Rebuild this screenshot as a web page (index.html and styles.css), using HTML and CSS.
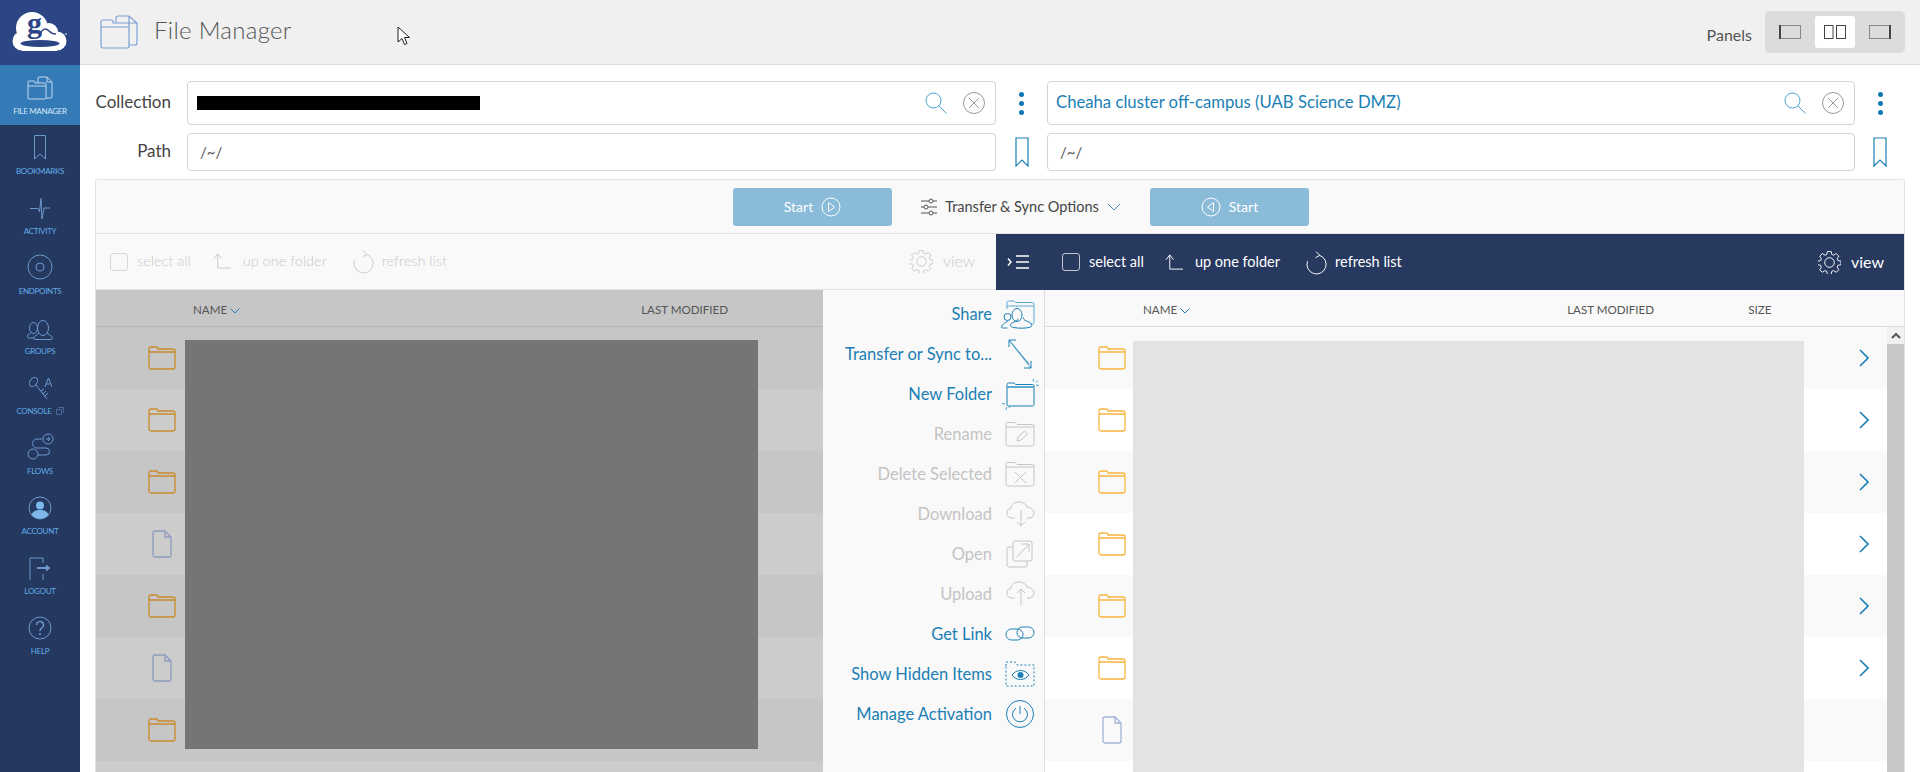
FILE: index.html
```html
<!DOCTYPE html>
<html lang="en">
<head>
    <meta charset="UTF-8">
    <title>File Manager</title>
    <link rel="stylesheet" href="styles.css">
</head>
<body>
    <svg class="defs" width="0" height="0">
        <symbol id="folder" viewBox="0 0 28 24">
            <path d="M1 6V3a2 2 0 0 1 2-2h5a2 2 0 0 1 2 2h15a2 2 0 0 1 2 2v16a2 2 0 0 1-2 2H3a2 2 0 0 1-2-2zM1 6h26" fill="none" stroke="currentColor" stroke-width="1.3"/>
        </symbol>
        <symbol id="file" viewBox="0 0 20 28">
            <path d="M3 1h10l6 6v18a2 2 0 0 1-2 2H3a2 2 0 0 1-2-2V3a2 2 0 0 1 2-2zM13 1v6h6" fill="none" stroke="currentColor" stroke-width="1.3"/>
        </symbol>
        <symbol id="chev" viewBox="0 0 10 18">
            <path d="M1 1l8 8-8 8" fill="none" stroke="currentColor" stroke-width="1.6"/>
        </symbol>
        <symbol id="gear" viewBox="0 0 24 24">
            <path d="M10 1h4l.6 3.2 2 .9L19.400 3.300l2.800 2.800-1.800 2.700.9 2 3.200.6v3.800l-3.200.6-.9 2 1.800 2.700-2.800 2.800-2.800-1.800-2 .9-.6 3.200h-4l-.6-3.200-2-.9-2.800 1.800-2.800-2.800 1.800-2.700-.9-2-3.200-.6v-3.800l3.200-.6.9-2-1.800-2.700 2.800-2.800 2.800 1.800 2-.9z" transform="translate(0 -.6) scale(.98)" fill="none" stroke="currentColor"/>
            <circle cx="12" cy="12" r="5" fill="none" stroke="currentColor"/>
        </symbol>
        <symbol id="up" viewBox="0 0 20 18">
            <path d="M1 6l4-5 4 5M5 1v15h14" fill="none" stroke="currentColor"/>
        </symbol>
        <symbol id="refresh" viewBox="0 0 22 26">
            <path d="M14.400 5.600A10 10 0 1 1 1.600 11.700M10.500 1.500l4 4-4.500 2.500" fill="none" stroke="currentColor"/>
        </symbol>
    </svg>

    <nav class="sidebar">
        <div class="logo">
            <svg width="80" height="65" viewBox="0 0 80 65">
                <g fill="#fff">
                    <circle cx="32" cy="28" r="16"/>
                    <circle cx="49" cy="32" r="9"/>
                    <circle cx="57" cy="41" r="9.500"/>
                    <circle cx="22" cy="41" r="9.500"/>
                    <rect x="22" y="34" width="35" height="17"/>
                    <circle cx="66" cy="34" r=".8"/>
                </g>
                <ellipse cx="40" cy="43.500" rx="19.500" ry="3.500" fill="#2c4585"/>
                <path d="M40 34c3-6 6-6 9-3 2 2 4 3 7 3" fill="none" stroke="#2c4585" stroke-width="1.500"/>
                <text x="27" y="33" class="logo-g">g</text>
            </svg>
        </div>
        <a class="nav-item nav-active">
            <svg width="26" height="24" viewBox="0 0 26 24" fill="none" stroke="#c4d9ee"><path d="M1 8V6a1 1 0 0 1 1-1h5a1 1 0 0 1 1 1v1h10a1 1 0 0 1 1 1v14a1 1 0 0 1-1 1H2a1 1 0 0 1-1-1zM1 10h18M11 7V2a1 1 0 0 1 1-1h8l5 5v15a1 1 0 0 1-1 1h-5M20 1v5h5"/></svg>
            <span>File Manager</span>
        </a>
        <a class="nav-item">
            <svg width="12" height="25" viewBox="0 0 12 25" fill="none" stroke="#6c98cc"><path d="M.5.5h11v23.500L6 19 .5 24z"/></svg>
            <span>Bookmarks</span>
        </a>
        <a class="nav-item">
            <svg width="20" height="22" viewBox="0 0 20 22" fill="none" stroke="#6c98cc"><path d="M0 10.500h8l1.500 3.500L11 .5l1 20.500 2-11h6"/></svg>
            <span>Activity</span>
        </a>
        <a class="nav-item">
            <svg width="26" height="26" viewBox="0 0 26 26" fill="none" stroke="#6c98cc"><circle cx="13" cy="13" r="12"/><circle cx="13" cy="13" r="4"/></svg>
            <span>Endpoints</span>
        </a>
        <a class="nav-item">
            <svg width="26" height="20" viewBox="0 0 26 20" fill="none" stroke="#6c98cc"><ellipse cx="16" cy="8" rx="5.500" ry="7.500"/><path d="M11.500 13C11 15 8 15 7 17c-1 2 0 2.500 2 2.500h14c2 0 3-.5 2-2.500-1-2-4-2-4.500-4"/><ellipse cx="6.500" cy="8" rx="4" ry="5.500"/><path d="M4 12.500C3 14 1 14 .5 16 0 17.500 1 18 2 18h4"/></svg>
            <span>Groups</span>
        </a>
        <a class="nav-item">
            <svg width="24" height="24" viewBox="0 0 24 24" fill="none" stroke="#6c98cc"><ellipse cx="5.500" cy="6" rx="3.500" ry="5" transform="rotate(35 5.500 6)"/><path d="M8 9l11 14M13 15l3-2M15 18l3-3M17 20l3-3M17 11l3.500-9 3.500 9M18.500 8h4"/></svg>
            <span class="nav-ext">Console<svg width="8" height="8" viewBox="0 0 8 8" fill="none" stroke="#4e6a98"><path d="M.5 2.500h5v5h-5zM2.500.5h5v5"/></svg></span>
        </a>
        <a class="nav-item">
            <svg width="27" height="27" viewBox="0 0 27 27" fill="none" stroke="#6c98cc"><circle cx="21" cy="6" r="5"/><circle cx="6" cy="21" r="5"/><path d="M19 6h4l-2-2M23 6l-2 2M15 6H10a4 4 0 0 0 0 9h9a3 3 0 0 1 0 7h-8"/></svg>
            <span>Flows</span>
        </a>
        <a class="nav-item">
            <svg width="24" height="24" viewBox="0 0 24 24"><circle cx="12" cy="12" r="11" fill="none" stroke="#6c98cc"/><circle cx="12" cy="9.500" r="4" fill="#7db8ec"/><path d="M3.500 19c1-4 5-5 8.500-5s7.500 1 8.500 5c-4.500 5-12.500 5-17 0z" fill="#7db8ec"/></svg>
            <span>Account</span>
        </a>
        <a class="nav-item">
            <svg width="22" height="23" viewBox="0 0 22 23" fill="none" stroke="#6c98cc"><path d="M1 23V1h13v5M14 17v6"/><path d="M8 11h12M17 8.500l3 2.500-3 2.500" stroke-width="1.800"/></svg>
            <span>Logout</span>
        </a>
        <a class="nav-item">
            <svg width="24" height="24" viewBox="0 0 24 24" fill="none" stroke="#6c98cc"><circle cx="12" cy="12" r="11"/><path d="M8.500 9a3.500 3.500 0 1 1 5 3.200c-1 .6-1.500 1.300-1.500 2.800" stroke-width="1.400"/><path d="M12 17v2" stroke-width="1.600"/></svg>
            <span>Help</span>
        </a>
    </nav>

    <main class="main">
        <header class="topbar">
            <svg class="title-icon" width="38" height="34" viewBox="0 0 38 34" fill="none" stroke="#7e9fd6" stroke-width="1.200"><path d="M1 9V7a2 2 0 0 1 2-2h8a2 2 0 0 1 2 2v1h14a2 2 0 0 1 2 2v21a2 2 0 0 1-2 2H3a2 2 0 0 1-2-2zM1 12h28M16 8V3a2 2 0 0 1 2-2h11l8 7v20a2 2 0 0 1-2 2h-6M29 1v7h8"/></svg>
            <h1>File Manager</h1>
            <svg class="cursor" width="14" height="20" viewBox="0 0 14 20"><path d="M1 1v15l4-3.500 2.500 6 2.500-1-2.500-6H12.500z" fill="#fff" stroke="#222"/></svg>
            <span class="panels-label">Panels</span>
            <div class="panels">
                <button class="panel-btn"><svg width="22" height="14" viewBox="0 0 22 14"><rect x=".5" y=".5" width="21" height="13" fill="none" stroke="#888"/><path d="M1 0v14" stroke="#444" stroke-width="2"/></svg></button>
                <button class="panel-btn panel-on"><svg width="22" height="14" viewBox="0 0 22 14" fill="none" stroke="#444"><rect x=".5" y=".5" width="8.500" height="13"/><rect x="12.500" y=".5" width="9" height="13"/></svg></button>
                <button class="panel-btn"><svg width="22" height="14" viewBox="0 0 22 14"><rect x=".5" y=".5" width="21" height="13" fill="none" stroke="#888"/><path d="M21 0v14" stroke="#444" stroke-width="2"/></svg></button>
            </div>
        </header>

        <div class="content">
            <div class="form">
                <label>Collection</label>
                <div class="field field-tall">
                    <span class="redact"></span>
                    <svg class="search" width="22" height="22" viewBox="0 0 22 22" fill="none" stroke="#4a9fd0"><circle cx="8.500" cy="8.500" r="7.500"/><path d="M14 14l7.500 7.500"/></svg>
                    <svg width="22" height="22" viewBox="0 0 22 22" fill="none" stroke="#999"><circle cx="11" cy="11" r="10.500"/><path d="M6 6l10 10M16 6L6 16"/></svg>
                </div>
                <div class="dots"><i></i><i></i><i></i></div>
                <div class="field field-tall">
                    <span class="collection-name">Cheaha cluster off-campus (UAB Science DMZ)</span>
                    <svg class="search" width="22" height="22" viewBox="0 0 22 22" fill="none" stroke="#4a9fd0"><circle cx="8.500" cy="8.500" r="7.500"/><path d="M14 14l7.500 7.500"/></svg>
                    <svg width="22" height="22" viewBox="0 0 22 22" fill="none" stroke="#999"><circle cx="11" cy="11" r="10.500"/><path d="M6 6l10 10M16 6L6 16"/></svg>
                </div>
                <div class="dots"><i></i><i></i><i></i></div>

                <label>Path</label>
                <div class="field"><span>/~/</span></div>
                <div class="mark"><svg width="14" height="30" viewBox="0 0 14 30" fill="none" stroke="#1b7fb5" stroke-width="1.200"><path d="M1 1h12v28l-6-6-6 6z"/></svg></div>
                <div class="field"><span>/~/</span></div>
                <div class="mark"><svg width="14" height="30" viewBox="0 0 14 30" fill="none" stroke="#1b7fb5" stroke-width="1.200"><path d="M1 1h12v28l-6-6-6 6z"/></svg></div>
            </div>

            <section class="panel">
                <div class="startbar">
                    <button class="start">Start
                        <svg width="20" height="20" viewBox="0 0 20 20" fill="none" stroke="#fff"><circle cx="10" cy="10" r="9"/><path d="M7.500 5.500l6 4.500-6 4.500z"/></svg>
                    </button>
                    <div class="options">
                        <svg width="16" height="20" viewBox="0 0 16 20" fill="none" stroke="#555"><path d="M0 4h8M12 4h4M0 10h3M7 10h9M0 16h8M12 16h4"/><circle cx="10" cy="4" r="2"/><circle cx="5" cy="10" r="2"/><circle cx="10" cy="16" r="2"/></svg>
                        <span>Transfer &amp; Sync Options</span>
                        <svg width="14" height="8" viewBox="0 0 14 8" fill="none" stroke="#5b86c8"><path d="M1 1l6 6 6-6"/></svg>
                    </div>
                    <button class="start">
                        <svg width="20" height="20" viewBox="0 0 20 20" fill="none" stroke="#fff"><circle cx="10" cy="10" r="9"/><path d="M12.500 5.500l-6 4.500 6 4.500z"/></svg>
                        Start
                    </button>
                </div>

                <div class="toolbars">
                    <div class="toolbar toolbar-left">
                        <span class="check"></span><span class="tool-text">select all</span>
                        <svg class="tool-up" width="19" height="17"><use href="#up"/></svg><span class="tool-text">up one folder</span>
                        <svg class="tool-refresh" width="21" height="25"><use href="#refresh"/></svg><span class="tool-text">refresh list</span>
                        <svg class="tool-gear" width="23" height="23"><use href="#gear"/></svg><span class="tool-text tool-view">view</span>
                    </div>
                    <div class="toolbar toolbar-right">
                        <svg class="collapse" width="22" height="16" viewBox="0 0 22 16" fill="none" stroke="#fff" stroke-width="1.500"><path d="M1 4.500l3 3.500-3 3.500M9 2h13M9 8h13M9 14h13"/></svg>
                        <span class="check"></span><span class="tool-text">select all</span>
                        <svg class="tool-up" width="19" height="17"><use href="#up"/></svg><span class="tool-text">up one folder</span>
                        <svg class="tool-refresh" width="21" height="25"><use href="#refresh"/></svg><span class="tool-text">refresh list</span>
                        <svg class="tool-gear" width="23" height="23"><use href="#gear"/></svg><span class="tool-text tool-view">view</span>
                    </div>
                </div>

                <div class="lists">
                    <div class="list list-dim">
                        <div class="list-head">
                            <span class="col-name">NAME <svg width="10" height="6" viewBox="0 0 10 6" fill="none" stroke="#1b7fb5"><path d="M.5.5L5 5 9.500.5"/></svg></span>
                            <span class="col-date">LAST MODIFIED</span>
                        </div>
                        <div class="rows">
                            <div class="row"><svg class="ico-folder"><use href="#folder"/></svg></div>
                            <div class="row"><svg class="ico-folder"><use href="#folder"/></svg></div>
                            <div class="row"><svg class="ico-folder"><use href="#folder"/></svg></div>
                            <div class="row"><svg class="ico-file"><use href="#file"/></svg></div>
                            <div class="row"><svg class="ico-folder"><use href="#folder"/></svg></div>
                            <div class="row"><svg class="ico-file"><use href="#file"/></svg></div>
                            <div class="row"><svg class="ico-folder"><use href="#folder"/></svg></div>
                            <div class="row"></div>
                            <div class="blur"></div>
                        </div>
                    </div>

                    <div class="menu">
                        <a class="menu-item"><span>Share</span>
                            <svg viewBox="0 0 30 30" fill="none" stroke="#1b7fb5"><path d="M2 10V3.500A1.500 1.500 0 0 1 3.500 2H9l1.500 1.500h17A1.500 1.500 0 0 1 29 5v18.500a1.500 1.500 0 0 1-1.500 1.500H25M2 7h27" stroke="#5fa9d4"/><ellipse cx="12" cy="16" rx="5" ry="6.500"/><path d="M14 20.500c0 2-1.500 2.500-4 3.500-2.500 1-3.500 2-3.500 3.500 0 1 1 1.500 3 2 6 1 13 1 17-.5 1.500-.5 1.500-1.500 1-2.500-.5-2-3-2.500-5-3.500-2.500-1-3-1.500-3-3.500" transform="translate(-1 -1)"/><circle cx="2.500" cy="18" r="3.500"/><path d="M3 22c-.5 1-2 1-3.500 2-1.500 1-3 3-3 4s1 1 3 1h3"/></svg>
                        </a>
                        <a class="menu-item"><span>Transfer or Sync to...</span>
                            <svg viewBox="0 0 30 30" fill="none" stroke="#1b7fb5"><path d="M4 1l20 24M4 1h7M4 1v7"/><path d="M26 29L6 4" stroke="#5fa9d4"/><path d="M26 29h-7M26 29v-7"/></svg>
                        </a>
                        <a class="menu-item"><span>New Folder</span>
                            <svg viewBox="0 0 30 30" fill="none" stroke="#1b7fb5"><path d="M3.500 4H9l1.500 1.500h17A1.500 1.500 0 0 1 29 7v18.500a1.500 1.500 0 0 1-1.500 1.500h-24A1.500 1.500 0 0 1 2 25.500v-20A1.500 1.500 0 0 1 3.500 4z"/><path d="M2 8h27" stroke="#5fa9d4" stroke-width="2"/><path d="M28 0l.5 2.500M33 1.500l-2 2M34 6.500l-3-.5M-3 24.500l3 .5M1 31l.5-3M5 29l-1.500-2" stroke="#4a9fd0"/></svg>
                        </a>
                        <a class="menu-item is-off"><span>Rename</span>
                            <svg viewBox="0 0 30 30" fill="none" stroke="currentColor"><path d="M1 8V5a1.500 1.500 0 0 1 1.500-1.500H10l2 2h15.500A1.500 1.500 0 0 1 29 7v18.500a1.500 1.500 0 0 1-1.500 1.500h-25A1.500 1.500 0 0 1 1 25.500zM1 8h28"/><path d="M12 22l1-4 6.500-6 3 3-6.500 6z"/></svg>
                        </a>
                        <a class="menu-item is-off"><span>Delete Selected</span>
                            <svg viewBox="0 0 30 30" fill="none" stroke="currentColor"><path d="M1 8V5a1.500 1.500 0 0 1 1.500-1.500H10l2 2h15.500A1.500 1.500 0 0 1 29 7v18.500a1.500 1.500 0 0 1-1.500 1.500h-25A1.500 1.500 0 0 1 1 25.500zM1 8h28"/><path d="M10 13l11 11M21 13L10 24"/></svg>
                        </a>
                        <a class="menu-item is-off"><span>Download</span>
                            <svg viewBox="0 0 30 30" fill="none" stroke="currentColor"><path d="M10 19H7a5 5 0 0 1-1-9.900C6 5 10 3 14 3c4 0 7 2 8 5 4 0 7 3 7 6s-2 5-5 5h-2M16 11v16M12 23l4 4 4-4"/></svg>
                        </a>
                        <a class="menu-item is-off"><span>Open</span>
                            <svg viewBox="0 0 30 30" fill="none" stroke="currentColor"><path d="M8 8H4a2 2 0 0 0-2 2v16a2 2 0 0 0 2 2h16a2 2 0 0 0 2-2v-4"/><rect x="8" y="2" width="19" height="20" rx="2"/><path d="M12 18L24 5M16 5h8v8"/></svg>
                        </a>
                        <a class="menu-item is-off"><span>Upload</span>
                            <svg viewBox="0 0 30 30" fill="none" stroke="currentColor"><path d="M10 19H7a5 5 0 0 1-1-9.900C6 5 10 3 14 3c4 0 7 2 8 5 4 0 7 3 7 6s-2 5-5 5h-2M16 26V10M12 14l4-4 4 4"/></svg>
                        </a>
                        <a class="menu-item"><span>Get Link</span>
                            <svg viewBox="0 0 30 30" fill="none" stroke="#1b7fb5"><rect x="1" y="10" width="17" height="11" rx="5.500"/><rect x="12" y="8" width="17" height="11" rx="5.500"/></svg>
                        </a>
                        <a class="menu-item"><span>Show Hidden Items</span>
                            <svg viewBox="0 0 30 30" fill="none" stroke="#1b7fb5"><path d="M1 7V3h9l2 3h17v21H1z" stroke-dasharray="2 2"/><path d="M7 16c4-6 13-6 17 0-4 6-13 6-17 0z"/><circle cx="15.500" cy="16" r="3" fill="#1b7fb5" stroke="none"/></svg>
                        </a>
                        <a class="menu-item"><span>Manage Activation</span>
                            <svg viewBox="0 0 30 30" fill="none" stroke="#1b7fb5"><circle cx="15" cy="15" r="13.500"/><path d="M11 9a7.500 7.500 0 1 0 8 0M15 7v8"/></svg>
                        </a>
                    </div>

                    <div class="list">
                        <div class="list-head">
                            <span class="col-name">NAME <svg width="10" height="6" viewBox="0 0 10 6" fill="none" stroke="#1b7fb5"><path d="M.5.5L5 5 9.500.5"/></svg></span>
                            <span class="col-date">LAST MODIFIED</span>
                            <span class="col-size">SIZE</span>
                        </div>
                        <div class="scroll-wrap">
                            <div class="rows">
                                <div class="row"><svg class="ico-folder"><use href="#folder"/></svg><svg class="ico-chev"><use href="#chev"/></svg></div>
                                <div class="row"><svg class="ico-folder"><use href="#folder"/></svg><svg class="ico-chev"><use href="#chev"/></svg></div>
                                <div class="row"><svg class="ico-folder"><use href="#folder"/></svg><svg class="ico-chev"><use href="#chev"/></svg></div>
                                <div class="row"><svg class="ico-folder"><use href="#folder"/></svg><svg class="ico-chev"><use href="#chev"/></svg></div>
                                <div class="row"><svg class="ico-folder"><use href="#folder"/></svg><svg class="ico-chev"><use href="#chev"/></svg></div>
                                <div class="row"><svg class="ico-folder"><use href="#folder"/></svg><svg class="ico-chev"><use href="#chev"/></svg></div>
                                <div class="row"><svg class="ico-file"><use href="#file"/></svg></div>
                                <div class="row"></div>
                                <div class="blur"></div>
                            </div>
                            <div class="scrollbar">
                                <div class="scroll-up"><svg width="10" height="6" viewBox="0 0 10 6" fill="none" stroke="#555" stroke-width="2"><path d="M1 5l4-4 4 4"/></svg></div>
                                <div class="scroll-thumb"></div>
                            </div>
                        </div>
                    </div>
                </div>
            </section>
        </div>
    </main>
</body>
</html>
```

FILE: styles.css
```css
* {
    margin: 0;
    padding: 0;
    box-sizing: border-box;
}

body {
    font-family: Lato, "Open Sans", sans-serif;
    font-weight: 300;
    height: 100vh;
    display: flex;
    overflow: hidden;
    background: #fff;
    color: #444;
}

.defs {
    position: absolute;
}

/* Sidebar */
.sidebar {
    width: 80px;
    flex: none;
    background: #253860;
}

.logo {
    height: 65px;
    background: #2c4585;
}

.logo-g {
    font-family: "Liberation Serif", serif;
    font-weight: bold;
    font-size: 30px;
    fill: #2c4585;
}

.nav-item {
    height: 60px;
    display: flex;
    flex-direction: column;
    align-items: center;
    justify-content: flex-end;
    gap: 6px;
    padding-bottom: 9px;
    color: #62ade8;
    font-size: 8px;
    font-weight: 400;
    text-transform: uppercase;
    letter-spacing: -.3px;
    white-space: nowrap;
}

.nav-active {
    background: #337ab7;
    color: #d6e8f6;
}

.nav-ext {
    display: flex;
    align-items: center;
    gap: 4px;
}

/* Header */
.main {
    flex: 1;
    min-width: 0;
    display: flex;
    flex-direction: column;
}

.topbar {
    height: 65px;
    flex: none;
    display: flex;
    align-items: center;
    padding: 0 15px 0 20px;
    background: #f0f0f0;
    border-bottom: 1px solid #ddd;
    position: relative;
}

.title-icon {
    margin-right: 16px;
}

h1 {
    font-size: 24px;
    font-weight: 300;
    color: #555;
    letter-spacing: .3px;
    flex: 1;
    padding-bottom: 5px;
}

.cursor {
    position: absolute;
    left: 317px;
    top: 26px;
}

.panels-label {
    font-size: 16px;
    font-weight: 400;
    margin-right: 13px;
    padding-top: 5px;
    color: #555;
}

.panels {
    display: flex;
    gap: 5px;
    align-items: center;
    height: 42px;
    padding: 0 5px;
    background: #dcdcdc;
    border-radius: 5px;
}

.panel-btn {
    width: 40px;
    height: 32px;
    background: transparent;
    border: none;
    border-radius: 3px;
    display: flex;
    align-items: center;
    justify-content: center;
}

.panel-on {
    background: #fff;
}

/* Collection and path */
.content {
    flex: 1;
    min-height: 0;
    padding: 16px 15px 0;
    display: flex;
    flex-direction: column;
    gap: 8px;
}

.form {
    display: grid;
    grid-template-columns: 92px 809px 51px 808px 50px;
    grid-template-rows: 44px 38px;
    row-gap: 8px;
    align-items: center;
}

.form label {
    font-size: 17px;
    font-weight: 400;
    text-align: right;
    padding: 0 16px 3px 0;
    color: #444;
}

.field {
    height: 100%;
    display: flex;
    align-items: center;
    padding: 0 10px 0 12px;
    border: 1px solid #d0d3da;
    border-radius: 4px;
    font-size: 15px;
    font-weight: 400;
    color: #555;
}

.field-tall {
    padding: 0 10px 0 9px;
    gap: 16px;
}

.redact {
    width: 283px;
    height: 14px;
    background: #000;
}

.collection-name {
    font-size: 16.700px;
    padding-bottom: 3px;
    margin-left: -1px;
    color: #1b7fb5;
}

.search {
    margin-left: auto;
}

.dots {
    display: flex;
    flex-direction: column;
    align-items: center;
    gap: 4px;
}

.dots i {
    width: 5px;
    height: 5px;
    background: #0f78b4;
    border-radius: 50%;
}

.mark {
    display: flex;
    justify-content: center;
}

/* Transfer panel */
.panel {
    flex: 1;
    min-height: 0;
    border: 1px solid #e3e3e3;
    border-bottom: none;
    border-radius: 3px 3px 0 0;
    display: flex;
    flex-direction: column;
}

.startbar {
    height: 54px;
    flex: none;
    display: flex;
    align-items: center;
    justify-content: center;
    padding-left: 42px;
    background: #f9f9f9;
    border-bottom: 1px solid #e3e3e3;
}

.start {
    width: 159px;
    height: 38px;
    display: flex;
    align-items: center;
    justify-content: center;
    gap: 8px;
    background: #8abbd9;
    border: none;
    border-radius: 3px;
    color: #fff;
    font: 400 14px Lato, sans-serif;
}

.options {
    width: 258px;
    display: flex;
    align-items: center;
    justify-content: center;
    gap: 8px;
    font-size: 14.500px;
    font-weight: 400;
    color: #444;
}

.toolbars {
    display: flex;
    height: 56px;
    flex: none;
}

.toolbar {
    display: flex;
    align-items: center;
    font-size: 14.500px;
}

.toolbar-left {
    width: 900px;
    padding-left: 14px;
    background: #f9f9f9;
    border-bottom: 1px solid #e3e3e3;
    color: #c9c9c9;
}

.toolbar-right {
    flex: 1;
    padding-left: 11px;
    background: #28395f;
    color: #fff;
    font-weight: 400;
}

.tool-text {
    padding-bottom: 2px;
}

.tool-view {
    font-size: 16px;
}

.collapse {
    margin-right: 33px;
}

.check {
    width: 18px;
    height: 18px;
    border: 1px solid currentColor;
    border-radius: 3px;
    margin-right: 9px;
    opacity: .7;
}

.tool-up {
    margin: 0 11px 0 21px;
}

.toolbar-left .tool-up {
    margin-left: 22px;
}

.tool-refresh {
    margin: 0 8px 0 26px;
}

.tool-gear {
    margin: 0 10px 0 auto;
}

.toolbar-left .tool-text:last-child {
    margin-right: 21px;
}

.toolbar-right .tool-text:last-child {
    margin-right: 20px;
}

/* File lists */
.lists {
    flex: 1;
    min-height: 0;
    display: flex;
}

.list {
    flex: 1;
    min-width: 0;
    display: flex;
    flex-direction: column;
}

.list-dim {
    width: 727px;
    flex: none;
    background: #c6c6c6;
}

.list-head {
    height: 37px;
    flex: none;
    display: flex;
    align-items: center;
    padding-top: 3px;
    background: #f9f9f9;
    border-bottom: 1px solid #ddd;
    font-size: 11.600px;
    font-weight: 400;
    color: #555;
}

.list-dim .list-head {
    background: #c6c6c6;
    border-color: #b6b6b6;
}

.col-name {
    margin-left: 98px;
}

.col-date {
    margin-left: 377px;
}

.col-size {
    margin-left: 94px;
}

.list-dim .col-name {
    margin-left: 97px;
}

.list-dim .col-date {
    margin-left: 401px;
}

.scroll-wrap {
    flex: 1;
    min-height: 0;
    display: flex;
}

.rows {
    flex: 1;
    min-width: 0;
    position: relative;
    overflow: hidden;
}

.row {
    height: 62px;
    display: flex;
    align-items: center;
    padding-left: 53px;
}

.row:nth-child(odd) {
    background: #f9f9f9;
}

.list-dim .row {
    padding-left: 52px;
    background: #ccc;
}

.list-dim .row:nth-child(odd) {
    background: #c6c6c6;
}

.ico-folder {
    width: 28px;
    height: 24px;
    color: #f9b43e;
}

.ico-file {
    width: 20px;
    height: 28px;
    margin-left: 4px;
    color: #a3b4d6;
}

.list-dim .ico-folder {
    color: #c98b2a;
}

.list-dim .ico-file {
    color: #8c9cbb;
}

.ico-chev {
    width: 10px;
    height: 18px;
    margin-left: auto;
    margin-right: 18px;
    color: #1b7fb5;
}

.blur {
    position: absolute;
    left: 88px;
    right: 83px;
    top: 14px;
    bottom: 0;
    background: #e3e3e3;
}

.list-dim .blur {
    left: 89px;
    right: 65px;
    top: 13px;
    bottom: 23px;
    background: #757575;
}

.scrollbar {
    width: 17px;
    flex: none;
    background: #f1f1f1;
}

.scroll-up {
    height: 17px;
    display: flex;
    align-items: center;
    justify-content: center;
}

.scroll-thumb {
    height: 428px;
    background: #c8c8c8;
}

/* Context menu */
.menu {
    width: 222px;
    flex: none;
    padding: 4px 9px 0 0;
    background: #f9f9f9;
    border-right: 1px solid #ddd;
}

.menu-item {
    height: 40px;
    display: flex;
    align-items: center;
    justify-content: flex-end;
    font-size: 16.500px;
    font-weight: 400;
    color: #1b7fb5;
}

.menu-item span {
    padding-bottom: 1px;
}

.menu-item svg {
    width: 30px;
    height: 30px;
    margin-left: 13px;
    flex: none;
    overflow: visible;
}

.is-off {
    color: #c4c4c4;
}
```
